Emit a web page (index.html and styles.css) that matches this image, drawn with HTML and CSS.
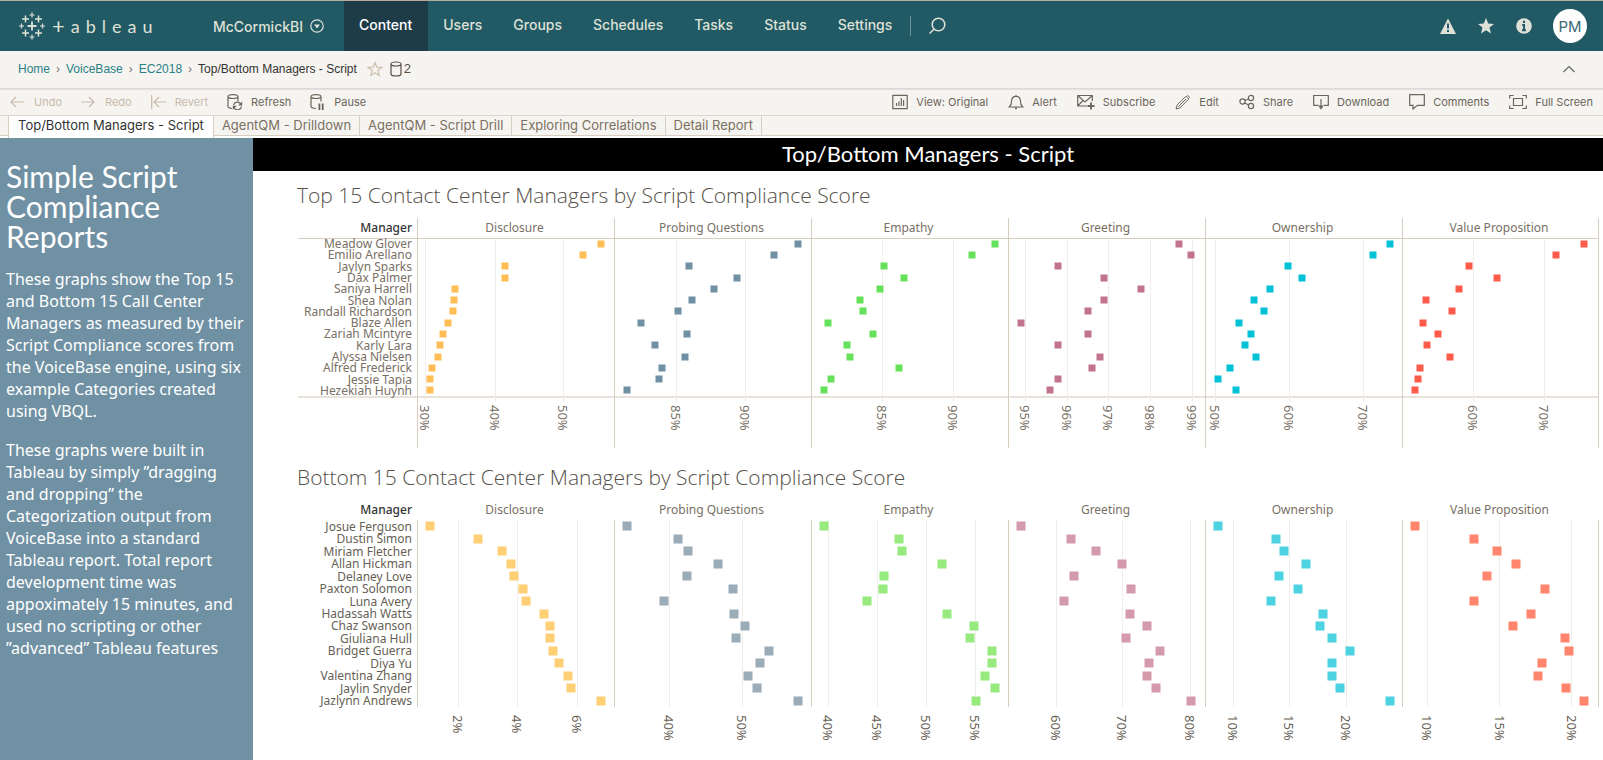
FILE: index.html
```html
<!DOCTYPE html>
<html lang="en">
<head>
<meta charset="utf-8">
<title>Top/Bottom Managers - Script</title>
<link rel="stylesheet" href="styles.css">
</head>
<body>
<header class="topbar">
  <a class="logo" href="#" aria-label="tableau">
    <svg class="logo-mark" viewBox="0 0 26 28" aria-hidden="true">
      <path stroke-width="1.8" d="M13 9.500v9M8.500 14h9"/>
      <path stroke-width="1.500" d="M6.500 3.500v7M3 7h7M19.500 3.500v7M16 7h7M6.500 17.500v7M3 21h7M19.500 17.500v7M16 21h7"/>
      <path stroke-width="1.200" d="M13 .500v5M10.500 3h5M13 22.500v5M10.500 25h5M2.500 11.500v5M0 14h5M23.500 11.500v5M21 14h5"/>
    </svg>
    <span class="logo-word"><span class="logo-t">+</span><span>a</span><span>b</span><span>l</span><span>e</span><span>a</span><span>u</span></span>
  </a>
  <button class="site" type="button">McCormickBI
    <svg class="i14" viewBox="0 0 14 14" aria-hidden="true"><circle cx="7" cy="7" r="6.200"/><path class="solid" d="M4 5.500h6L7 9.500z"/></svg>
  </button>
  <nav class="nav">
    <a class="nav-item active" href="#">Content</a>
    <a class="nav-item" href="#">Users</a>
    <a class="nav-item" href="#">Groups</a>
    <a class="nav-item" href="#">Schedules</a>
    <a class="nav-item" href="#">Tasks</a>
    <a class="nav-item" href="#">Status</a>
    <a class="nav-item" href="#">Settings</a>
  </nav>
  <button class="search" type="button" aria-label="Search">
    <svg class="i18" viewBox="0 0 18 18" aria-hidden="true"><circle cx="10.500" cy="7.500" r="6.300"/><path d="M6.200 12L1.500 16.500"/></svg>
  </button>
  <div class="account">
    <button type="button" aria-label="Alerts"><svg class="i18" viewBox="0 0 18 18" aria-hidden="true"><path class="solid" d="M9 1.500L17 17H1z"/><path class="hole" d="M9 6.500v5M9 13v2"/></svg></button>
    <button type="button" aria-label="Favorites"><svg class="i18" viewBox="0 0 18 18" aria-hidden="true"><path class="solid" d="M9 1l2.200 5.600 5.800.300-4.500 3.700 1.500 5.900L9 13.200 4 16.500l1.500-5.900L1 6.900l5.800-.300z"/></svg></button>
    <button type="button" aria-label="Information"><svg class="i18" viewBox="0 0 18 18" aria-hidden="true"><circle class="solid" cx="9" cy="9" r="7.800"/><path class="hole" d="M9 3.800v2.200M7.200 8H9v5M7 13.300h4"/></svg></button>
    <button class="avatar" type="button">PM</button>
  </div>
</header>

<div class="crumbs">
  <a href="#">Home</a><span class="sep">›</span>
  <a href="#">VoiceBase</a><span class="sep">›</span>
  <a href="#">EC2018</a><span class="sep">›</span>
  <span>Top/Bottom Managers - Script</span>
  <button class="fav" type="button" aria-label="Add to favorites"><svg class="i16" viewBox="0 0 16 16" aria-hidden="true"><path d="M8 1.500l1.800 4.700 5 .200-3.900 3.100 1.300 4.900L8 11.700l-4.200 2.700 1.300-4.900L1.200 6.400l5-.200z"/></svg></button>
  <span class="sources"><svg class="i16" viewBox="0 0 16 16" aria-hidden="true"><path d="M3 3v10c0 1 2.200 2 5 2s5-1 5-2V3M3 3c0-1.100 2.200-2 5-2s5 .900 5 2-2.200 2-5 2-5-.900-5-2z"/></svg>2</span>
  <button class="collapse" type="button" aria-label="Collapse"><svg class="i14" viewBox="0 0 14 14" aria-hidden="true"><path d="M1.500 10L7 4.500 12.500 10"/></svg></button>
</div>

<div class="toolbar">
  <div class="group history">
    <button type="button" disabled><svg class="i16" viewBox="0 0 16 16" aria-hidden="true"><path d="M14 8H.800M6 3L.800 8 6 13"/></svg>Undo</button>
    <button type="button" disabled><svg class="i16" viewBox="0 0 16 16" aria-hidden="true"><path d="M0 8h13M8 3l5 5-5 5"/></svg>Redo</button>
    <button type="button" disabled><svg class="i16" viewBox="0 0 16 16" aria-hidden="true"><path d="M.700 1v14M15.500 8H3M8 3L3 8l5 5"/></svg>Revert</button>
    <button type="button"><svg class="i16" viewBox="0 0 16 16" aria-hidden="true"><path d="M1 2.500v10c0 1 1.500 1.700 4 2M11 7V2.500M1 2.500C1 1.500 3 .600 6 .600s5 .900 5 1.900-2 2-5 2-5-1-5-2zM6.500 11a4 4 0 0 1 7.300-1M14.500 12.500a4 4 0 0 1-7.300 1.500"/><path class="solid" d="M15.200 7.500v4h-4zM5.800 15.800v-4h4z"/></svg>Refresh</button>
    <button type="button"><svg class="i16" viewBox="0 0 16 16" aria-hidden="true"><path d="M1 2.500v10c0 1 1.500 1.700 5 2M11 7.500v-5M1 2.500C1 1.500 3 .600 6 .600s5 .900 5 1.900-2 2-5 2-5-1-5-2z"/><path class="solid" d="M8.500 9.500h1.800V16H8.500zM11.800 9.500h1.800V16h-1.800z"/></svg>Pause</button>
  </div>
  <div class="group">
    <button type="button"><svg class="i16" viewBox="0 0 16 16" aria-hidden="true"><path d="M.800 1.300h14.400v13.400H.800zM4.500 12V9M6.900 12V7.500M9.300 12V4M11.600 12V6"/></svg>View: Original</button>
    <button type="button"><svg class="i16" viewBox="0 0 16 16" aria-hidden="true"><path d="M8 1v1.500M1.200 13h13.600c-2-1.500-2.300-3-2.300-5.500C12.500 4 11 2.300 8 2.300S3.500 4 3.500 7.500c0 2.500-.300 4-2.300 5.500z"/><path class="solid" d="M6.200 13.500h3.600L8 15.800z"/></svg>Alert</button>
    <button type="button"><svg class="i18" viewBox="0 0 18 16" aria-hidden="true"><path d="M10 12H.700V1.500h14.600V7M.700 1.500L8 8l7.300-6.500M.700 12L6 6.500"/><path stroke-width="1.800" d="M14 8.500v7M10.500 12h7"/></svg>Subscribe</button>
    <button type="button"><svg class="i16" viewBox="0 0 16 16" aria-hidden="true"><path stroke-width="1" d="M1 15l1.200-4L11 2.200l2.800 2.800L5 13.800zM12.200 1l2.800 2.800M3.500 12.500L11 5"/></svg>Edit</button>
    <button type="button"><svg class="i16" viewBox="0 0 16 16" aria-hidden="true"><circle cx="3.500" cy="7.500" r="2.600"/><circle cx="12" cy="4" r="2.600"/><circle cx="12" cy="12" r="2.600"/><path d="M6 6.500L9.500 5M5.700 9l4 2"/></svg>Share</button>
    <button type="button"><svg class="i16" viewBox="0 0 16 16" aria-hidden="true"><path d="M5.500 11.300H.700V1.500h14.600v9.800h-4.500M8 5v8"/><path class="solid" d="M5.200 11.500h5.600L8 15.800z"/></svg>Download</button>
    <button type="button"><svg class="i16" viewBox="0 0 16 16" aria-hidden="true"><path d="M.700.700h14.600v10.600H8.500L4 15v-3.700H.700z"/></svg>Comments</button>
    <button type="button"><svg class="i18" viewBox="0 0 18 16" aria-hidden="true"><path d="M4.500 4.500h9v7h-9zM.700 4.500v-3h4M13.300 1.500h4v3M17.300 11.500v3h-4M4.700 14.500h-4v-3"/></svg>Full Screen</button>
  </div>
</div>

<nav class="tabs">
  <a class="tab current" href="#">Top/Bottom Managers - Script</a>
  <a class="tab" href="#">AgentQM - Drilldown</a>
  <a class="tab" href="#">AgentQM - Script Drill</a>
  <a class="tab" href="#">Exploring Correlations</a>
  <a class="tab" href="#">Detail Report</a>
</nav>

<div class="dashboard">
  <aside class="notes">
    <h2>Simple Script Compliance Reports</h2>
    <p>These graphs show the Top 15 and Bottom 15 Call Center Managers as measured by their Script Compliance scores from the VoiceBase engine, using six example Categories created using VBQL.</p>
    <p>These graphs were built in Tableau by simply ”dragging and dropping” the Categorization output from VoiceBase into a standard Tableau report. Total report development time was appoximately 15 minutes, and used no scripting or other ”advanced” Tableau features</p>
  </aside>
  <main class="main">
    <h1 class="banner">Top/Bottom Managers - Script</h1>
    <section class="sheet">
      <h2>Top 15 Contact Center Managers by Script Compliance Score</h2>
      <div class="chart top" id="top"></div>
    </section>
    <section class="sheet">
      <h2>Bottom 15 Contact Center Managers by Script Compliance Score</h2>
      <div class="chart bottom" id="bottom"></div>
    </section>
  </main>
</div>
<script src="charts.js"></script>
</body>
</html>
```

FILE: styles.css
```css
* { box-sizing: border-box; }
body {
  margin: 0;
  min-height: 100vh;
  display: flex;
  flex-direction: column;
  background: #fff;
  color: #333;
  font-family: Inter, "Open Sans", sans-serif;
}
h1, h2, p { margin: 0; font-weight: 400; }
a { color: inherit; text-decoration: none; }
button {
  font: inherit;
  color: inherit;
  background: none;
  border: 0;
  padding: 0;
}
svg { display: block; flex: none; fill: none; stroke: currentColor; stroke-width: 1.2; }
svg .solid { fill: currentColor; stroke: none; }
svg .hole { stroke: #215964; stroke-width: 2; }
.i14 { width: 14px; height: 14px; }
.i16 { width: 16px; height: 16px; }
.i18 { width: 18px; height: 18px; }

/* Site header */
.topbar {
  display: flex;
  height: 51px;
  border-top: 1px solid #b8aa9b;
  padding: 0 16px 0 19px;
  background: #215964;
  color: #dfe1d6;
  font-size: 14px;
  font-weight: 500;
}
.logo { display: flex; align-items: center; gap: 7px; width: 194px; }
.logo-mark { width: 26px; height: 28px; }
.logo-word { display: flex; align-items: center; gap: 6px; font: 18px/24px Lato, sans-serif; }
.logo-t { font-size: 22px; }
.site { display: flex; align-items: center; gap: 7px; padding-right: 20px; }
.nav { display: flex; }
.nav-item { display: flex; align-items: center; padding: 0 16px 4px 15px; }
.nav-item.active { background: #1e3c48; color: #fff; }
.search {
  align-self: center;
  height: 20px;
  margin-left: 2px;
  border-left: 1px solid #6f939a;
  padding-left: 17px;
}
.search .i18 { stroke-width: 1.6; }
.account { display: flex; align-items: center; gap: 20px; margin-left: auto; }
.avatar {
  width: 34px;
  height: 34px;
  border-radius: 50%;
  background: #fff;
  color: #3c6a73;
  font-size: 15px;
  font-weight: 400;
}

/* Breadcrumbs */
.crumbs {
  display: flex;
  align-items: center;
  height: 38px;
  padding: 0 27px 2px 18px;
  background: #f6f4f0;
  border-bottom: 1px solid #dcdad8;
  box-shadow: 0 1px 1px #e4e2df;
  position: relative;
  font: 12px/16px "Liberation Sans", sans-serif;
}
.crumbs a { color: #2a7f86; }
.sep { width: 16px; text-align: center; color: #777; }
.fav { margin-left: 10px; color: #cdbfae; }
.sources { display: flex; align-items: center; margin-left: 5px; font-size: 13px; color: #55504a; }
.collapse { margin-left: auto; color: #666; }

/* View toolbar */
.toolbar {
  display: flex;
  justify-content: space-between;
  height: 27px;
  padding: 0 10px;
  background: #f6f4f0;
  border-bottom: 1px solid #ddd3c8;
  color: #6b655b;
  font-size: 11px;
}
.group { display: flex; align-items: center; gap: 20px; }
.group.history { gap: 19px; }
.toolbar button { display: flex; align-items: center; gap: 8px; white-space: nowrap; }
.toolbar button:disabled { color: #c8baaa; }
.toolbar .i18 { height: 16px; }

/* Sheet tabs */
.tabs {
  display: flex;
  height: 20px;
  padding-left: 8px;
  margin-bottom: 2px;
  background: #f6f4f0;
  border-bottom: 1px solid #d8cdc1;
  font-size: 13px;
  line-height: 18px;
}
.tab { padding: 0 8px; border-right: 1px solid #d8cdc1; color: #7a7063; white-space: nowrap; }
.tab.current { height: 22px; padding: 0 9px; border-left: 1px solid #d8cdc1; background: #fff; color: #333; }

/* Dashboard */
.dashboard { display: flex; flex: 1; }
.notes {
  flex: none;
  width: 253px;
  padding: 23px 8px 0 6px;
  background: #7091a3;
  color: #fff;
  font: 16px/22px "Noto Sans", sans-serif;
}
.notes h2 { font: 30px/30px Lato, sans-serif; margin-bottom: 17px; }
.notes p { margin-bottom: 17px; }
.main { flex: 1; min-width: 0; }
.banner {
  height: 33px;
  background: #000;
  color: #fff;
  text-align: center;
  font: 22px/32px Lato, sans-serif;
}
.sheet { padding: 12px 4px 0 44px; }
.sheet + .sheet { padding-top: 17px; }
.sheet h2 {
  margin-bottom: 11px;
  color: #55504a;
  font: 300 21px/24px "Open Sans", sans-serif;
}

/* Charts: one label column and six panels */
.chart {
  display: grid;
  grid-template-columns: 120px repeat(6, 1fr);
  color: #787065;
  font: 12px/20px "Noto Sans", sans-serif;
}
.col { border-left: 1px solid transparent; }
.head { height: 20px; padding-right: 3px; text-align: center; }
.names .head { padding-right: 5px; text-align: right; color: #333; font-weight: 500; }
.plot { position: relative; }
.names .plot { display: flex; flex-direction: column; padding-right: 5px; text-align: right; }
.name { flex: 1; display: flex; align-items: center; justify-content: flex-end; min-height: 0; line-height: 11px; white-space: nowrap; }
.axis { position: relative; }
.grid-line { position: absolute; top: 0; bottom: 0; width: 1px; background: #efeee9; }
.tick { position: absolute; top: 8px; writing-mode: vertical-rl; font-size: 13px; line-height: 16px; translate: -50% 0; }
.mark { position: absolute; translate: -50% -50%; }

.top .col + .col { border-left-color: #d6ccc0; }
.top .col:last-child { border-right: 1px solid #d6ccc0; }
.top .head { box-shadow: 0 1px #d6ccc0; }
.top .plot { height: 160px; border-bottom: 2px solid #e8e2da; }
.top .axis { height: 50px; }
.top .tick { top: 7px; }
.top .grid-line { top: 1px; bottom: -6px; }
.top .mark { width: 7px; height: 7px; }

.bottom { color: #665f55; }
.bottom .head { color: #787065; }
.bottom .names .head { color: #333; }
.bottom .plot { height: 187px; }
.bottom .col + .col .plot { border-left: 1px solid #d6ccc0; margin-left: -1px; }
.bottom .col:last-child .plot { border-right: 1px solid #d6ccc0; }
.bottom .axis { height: 40px; }
.bottom .mark { width: 9px; height: 9px; }
```

FILE: charts.js
```js
// Every panel is SPAN units wide; marks and ticks are given in those units.
const SPAN = 197;

const charts = {
  top: {
    names: ["Meadow Glover", "Emilio Arellano", "Jaylyn Sparks", "Dax Palmer", "Saniya Harrell",
      "Shea Nolan", "Randall Richardson", "Blaze Allen", "Zariah Mcintyre", "Karly Lara",
      "Alyssa Nielsen", "Alfred Frederick", "Jessie Tapia", "Hezekiah Huynh"],
    panels: [
      ["Disclosure", "#ffbe55", [[7, "30%"], [77, "40%"], [146, "50%"]],
        [184, 166, 87, 87, 37, 36, 35, 30, 25, 22, 20, 14, 12, 12]],
      ["Probing Questions", "#7090a4", [[61, "85%"], [131, "90%"]],
        [184, 160, 74, 123, 100, 77, 63, 26, 72, 40, 70, 47, 44, 12]],
      ["Empathy", "#66e25a", [[70, "85%"], [142, "90%"]],
        [184, 161, 72, 92, 68, 48, 51, 16, 61, 35, 38, 87, 19, 12]],
      ["Greeting", "#c3748d", [[16, "95%"], [58, "96%"], [100, "97%"], [142, "98%"], [184, "99%"]],
        [171, 183, 49, 95, 133, 95, 79, 12, 79, 49, 91, 83, 49, 41]],
      ["Ownership", "#00c2d7", [[9, "50%"], [83, "60%"], [158, "70%"]],
        [185, 168, 82, 96, 64, 48, 58, 33, 45, 39, 50, 24, 12, 30]],
      ["Value Proposition", "#ff5a4a", [[71, "60%"], [142, "70%"]],
        [183, 155, 67, 95, 57, 23, 50, 20, 35, 24, 47, 17, 15, 12]]
    ]
  },
  bottom: {
    names: ["Josue Ferguson", "Dustin Simon", "Miriam Fletcher", "Allan Hickman", "Delaney Love",
      "Paxton Solomon", "Luna Avery", "Hadassah Watts", "Chaz Swanson", "Giuliana Hull",
      "Bridget Guerra", "Diya Yu", "Valentina Zhang", "Jaylin Snyder", "Jazlynn Andrews"],
    panels: [
      ["Disclosure", "#ffcf76", [[40, "2%"], [100, "4%"], [160, "6%"]],
        [12, 60, 84, 93, 96, 106, 109, 127, 133, 133, 136, 142, 151, 154, 184]],
      ["Probing Questions", "#9aacb8", [[54, "40%"], [128, "50%"]],
        [12, 63, 73, 104, 72, 119, 49, 120, 131, 122, 155, 146, 134, 143, 184]],
      ["Empathy", "#96ea7e", [[16, "40%"], [65, "45%"], [115, "50%"], [164, "55%"]],
        [12, 87, 90, 131, 72, 71, 55, 136, 163, 159, 181, 181, 174, 184, 165]],
      ["Greeting", "#d49aab", [[47, "60%"], [114, "70%"], [182, "80%"]],
        [12, 62, 87, 114, 65, 123, 55, 122, 139, 118, 152, 141, 139, 148, 183]],
      ["Ownership", "#4dd2e1", [[27, "10%"], [83, "15%"], [141, "20%"]],
        [12, 70, 78, 101, 73, 92, 65, 118, 115, 127, 145, 127, 127, 135, 185]],
      ["Value Proposition", "#ff866d", [[24, "10%"], [97, "15%"], [170, "20%"]],
        [12, 72, 95, 114, 85, 143, 72, 129, 111, 164, 168, 140, 136, 165, 183]]
    ]
  }
};

function add(parent, className, text) {
  const node = document.createElement("div");
  node.className = className;
  if (text) node.textContent = text;
  parent.appendChild(node);
  return node;
}

for (const [id, chart] of Object.entries(charts)) {
  const root = document.getElementById(id);
  const labels = add(root, "col names");
  add(labels, "head", "Manager");
  const list = add(labels, "plot");
  chart.names.forEach(name => add(list, "name", name));

  for (const [title, color, ticks, values] of chart.panels) {
    const col = add(root, "col");
    add(col, "head", title);
    const plot = add(col, "plot");
    const axis = add(col, "axis");
    for (const [at, label] of ticks) {
      const left = (at / SPAN * 100).toFixed(2) + "%";
      add(plot, "grid-line").style.left = left;
      add(axis, "tick", label).style.left = left;
    }
    values.forEach((value, row) => {
      const mark = add(plot, "mark");
      mark.style.left = (value / SPAN * 100).toFixed(2) + "%";
      mark.style.top = ((row + 0.5) / values.length * 100).toFixed(2) + "%";
      mark.style.background = color;
    });
  }
}
```
